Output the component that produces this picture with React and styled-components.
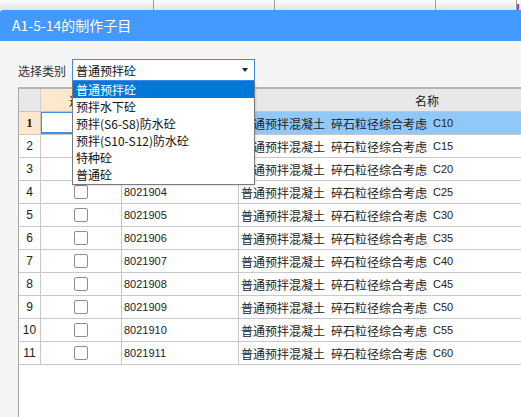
import React from "react";
import styled, { createGlobalStyle } from "styled-components";

const Global = createGlobalStyle`
  html, body { margin: 0; padding: 0; background: #f4f4f4; overflow: hidden; }
  #root { height: 417px; }
  * { box-sizing: border-box; }
`;

const CJK = `"Noto Sans CJK SC", "Noto Sans", sans-serif`;

const Page = styled.div`
  display: flex;
  flex-direction: column;
  height: 417px;
  width: 521px;
  overflow: hidden;
  font-family: ${CJK};
`;

const TopStrip = styled.div`
  height: 10px;
  flex: none;
  display: flex;
  background: linear-gradient(#fdfdfd, #e4e4e4);
`;

const StripCell = styled.div`
  flex: none;
  width: ${(p) => p.w}px;
  height: 10px;
  border-right: 1px solid #9c9c9c;
`;

const StripMark = styled.div`
  width: 2px;
  height: 6px;
  margin-top: 4px;
  background: #b040c0;
`;

const Dialog = styled.div`
  flex: 1;
  display: flex;
  flex-direction: column;
  min-height: 0;
`;

const TitleBar = styled.div`
  height: 31px;
  flex: none;
  background: #4499ff;
  border-top-left-radius: 3px;
  color: #fff;
  font-size: 14px;
  line-height: 31px;
  padding-left: 12px;
`;

const Body = styled.div`
  flex: 1;
  display: flex;
  flex-direction: column;
  padding: 18px 0 0 18px;
  min-height: 0;
`;

const Toolbar = styled.div`
  display: flex;
  align-items: center;
  gap: 6px;
  height: 22px;
  flex: none;
  position: relative;
  z-index: 5;
`;

const Label = styled.span`
  font-size: 12px;
  color: #333;
`;

const SelectWrap = styled.div`
  position: relative;
  width: 183px;
  height: 22px;
`;

const SelectBox = styled.div`
  height: 22px;
  border: 1px solid #3c8de4;
  background: #fff;
  display: flex;
  align-items: center;
  justify-content: space-between;
  padding: 0 5px 0 3px;
  font-size: 12px;
  color: #111;
`;

const Arrow = styled.span`
  width: 0;
  height: 0;
  border-left: 3.5px solid transparent;
  border-right: 3.5px solid transparent;
  border-top: 4px solid #222;
  margin-right: 1px;
`;

const DropList = styled.ul`
  position: absolute;
  left: 0;
  top: 22px;
  width: 183px;
  margin: 0;
  padding: 0 0 1px;
  list-style: none;
  background: #fff;
  border: 1px solid #7a7a7a;
  border-top: none;
  box-shadow: 1px 1px 2px rgba(0, 0, 0, 0.12);
`;

const DropItem = styled.li`
  height: 17px;
  line-height: 17px;
  padding-left: 3px;
  font-size: 12px;
  color: ${(p) => (p.active ? "#fff" : "#111")};
  background: ${(p) => (p.active ? "#0078d7" : "transparent")};
  white-space: nowrap;
`;

const Grid = styled.div`
  margin-top: 6px;
  flex: 1;
  min-height: 0;
  background: #fff;
  border-top: 2px solid #b6b6b6;
  border-left: 1px solid #a8a8a8;
  display: grid;
  grid-template-columns: 22px 81px 117px 377px;
  grid-auto-rows: 23px;
  align-content: start;
  overflow: hidden;
  width: 620px;
`;

const HeadCell = styled.div`
  background: ${(p) => (p.hl ? "#fde8cc" : "#e8e8e8")};
  border-right: 1px solid #d0d0d0;
  border-bottom: 1px solid #c4c4c4;
  font-size: 12px;
  color: #222;
  display: flex;
  align-items: center;
  justify-content: center;
`;

const Cell = styled.div`
  border-right: 1px solid #c8c8c8;
  border-bottom: 1px solid #c8c8c8;
  background: ${(p) => p.bg || "#fff"};
  display: flex;
  align-items: center;
  justify-content: ${(p) => (p.center ? "center" : "flex-start")};
  padding-left: ${(p) => (p.center ? 0 : 2)}px;
  font-size: 12px;
  color: #222;
  white-space: nowrap;
  overflow: hidden;
  position: relative;
`;

const NumText = styled.span`
  font-family: ${(p) => (p.bold ? `"Liberation Serif", serif` : `"Liberation Sans", sans-serif`)};
  font-weight: ${(p) => (p.bold ? 700 : 400)};
  font-size: ${(p) => (p.bold ? 13 : 12)}px;
`;

const CodeText = styled.span`
  font-family: "Liberation Sans", sans-serif;
  font-size: 11px;
`;

const NamePart = styled.span`
  font-size: 12px;
  margin-right: 6px;
`;

const Grade = styled.span`
  font-family: "Liberation Sans", sans-serif;
  font-size: 11px;
`;

const CheckBox = styled.span`
  width: 14px;
  height: 14px;
  border: 1px solid #8e8e8e;
  border-radius: 2px;
  background: #fff;
`;

const ActiveFrame = styled.div`
  position: absolute;
  inset: -1px 0 0 -1px;
  border: 2px solid #3b8fe8;
  pointer-events: none;
`;

const options = ["普通预拌砼", "预拌水下砼", "预拌(S6-S8)防水砼", "预拌(S10-S12)防水砼", "特种砼", "普通砼"];
const grades = ["C10", "C15", "C20", "C25", "C30", "C35", "C40", "C45", "C50", "C55", "C60"];

export default function App() {
  return (
    <Page>
      <Global />
      <TopStrip>
        <StripCell w={154} />
        <StripCell w={121} />
        <StripCell w={161} />
        <StripCell w={81} />
        <StripMark />
      </TopStrip>
      <Dialog>
        <TitleBar>A1-5-14的制作子目</TitleBar>
        <Body>
          <Toolbar>
            <Label>选择类别</Label>
            <SelectWrap>
              <SelectBox>
                <span>普通预拌砼</span>
                <Arrow />
              </SelectBox>
              <DropList>
                {options.map((o, i) => (
                  <DropItem key={o} active={i === 0}>
                    {o}
                  </DropItem>
                ))}
              </DropList>
            </SelectWrap>
          </Toolbar>
          <Grid>
            <HeadCell />
            <HeadCell hl>选择</HeadCell>
            <HeadCell />
            <HeadCell>名称</HeadCell>
            {grades.map((g, i) => {
              const first = i === 0;
              const code = `80219${String(i + 1).padStart(2, "0")}`;
              return (
                <React.Fragment key={g}>
                  <Cell center bg={first ? "#fde8cc" : "#fff"}>
                    <NumText bold={first}>{i + 1}</NumText>
                  </Cell>
                  <Cell center>
                    {first ? <ActiveFrame /> : <CheckBox />}
                  </Cell>
                  <Cell bg={first ? "#92c8f8" : "#fff"}>
                    <CodeText>{code}</CodeText>
                  </Cell>
                  <Cell bg={first ? "#92c8f8" : "#fff"}>
                    <NamePart>普通预拌混凝土</NamePart>
                    <NamePart>碎石粒径综合考虑</NamePart>
                    <Grade>{g}</Grade>
                  </Cell>
                </React.Fragment>
              );
            })}
          </Grid>
        </Body>
      </Dialog>
    </Page>
  );
}
